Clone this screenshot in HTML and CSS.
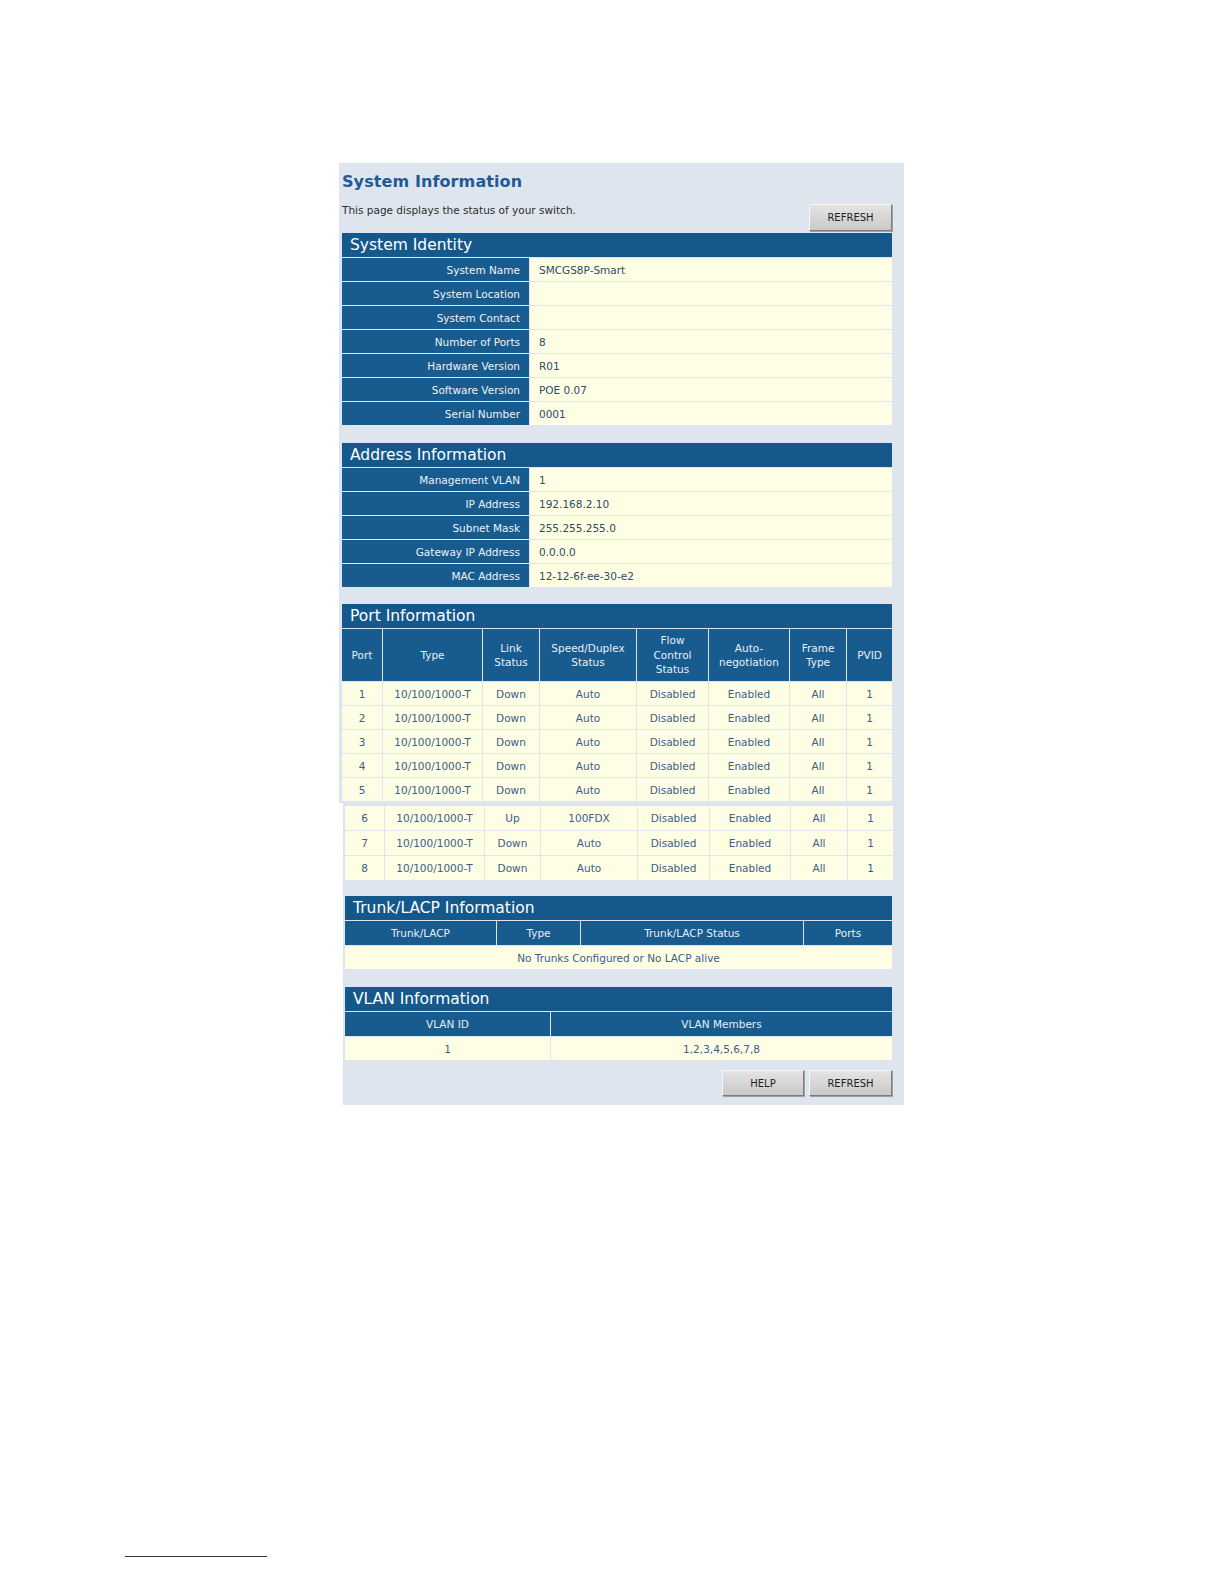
FILE: index.html
```html
<!DOCTYPE html>
<html>
<head>
<meta charset="utf-8">
<title>System Information</title>
<link rel="stylesheet" href="styles.css">
</head>
<body>
<div class="panel panel-top">
  <h1 class="title">System Information</h1>
  <div class="intro">
    <p class="desc">This page displays the status of your switch.</p>
    <button class="btn btn-top">REFRESH</button>
  </div>

  <div class="section first">
    <div class="sec-head">System Identity</div>
    <table class="kv">
      <tr><td class="lbl">System Name</td><td class="val">SMCGS8P-Smart</td></tr>
      <tr><td class="lbl">System Location</td><td class="val"></td></tr>
      <tr><td class="lbl">System Contact</td><td class="val"></td></tr>
      <tr><td class="lbl">Number of Ports</td><td class="val">8</td></tr>
      <tr><td class="lbl">Hardware Version</td><td class="val">R01</td></tr>
      <tr><td class="lbl">Software Version</td><td class="val">POE 0.07</td></tr>
      <tr><td class="lbl">Serial Number</td><td class="val">0001</td></tr>
    </table>
  </div>

  <div class="section">
    <div class="sec-head">Address Information</div>
    <table class="kv">
      <tr><td class="lbl">Management VLAN</td><td class="val">1</td></tr>
      <tr><td class="lbl">IP Address</td><td class="val">192.168.2.10</td></tr>
      <tr><td class="lbl">Subnet Mask</td><td class="val">255.255.255.0</td></tr>
      <tr><td class="lbl">Gateway IP Address</td><td class="val">0.0.0.0</td></tr>
      <tr><td class="lbl">MAC Address</td><td class="val">12-12-6f-ee-30-e2</td></tr>
    </table>
  </div>

  <div class="section ports-sec">
    <div class="sec-head">Port Information</div>
    <table class="grid ports ports-a">
      <colgroup>
        <col class="c-port"><col class="c-type"><col class="c-link"><col class="c-speed">
        <col class="c-flow"><col class="c-auto"><col class="c-frame"><col class="c-pvid">
      </colgroup>
      <tr class="hrow tall">
        <th>Port</th><th>Type</th><th>Link<br>Status</th><th>Speed/Duplex<br>Status</th>
        <th>Flow<br>Control<br>Status</th><th>Auto-<br>negotiation</th><th>Frame<br>Type</th><th>PVID</th>
      </tr>
      <tr><td>1</td><td>10/100/1000-T</td><td>Down</td><td>Auto</td><td>Disabled</td><td>Enabled</td><td>All</td><td>1</td></tr>
      <tr><td>2</td><td>10/100/1000-T</td><td>Down</td><td>Auto</td><td>Disabled</td><td>Enabled</td><td>All</td><td>1</td></tr>
      <tr><td>3</td><td>10/100/1000-T</td><td>Down</td><td>Auto</td><td>Disabled</td><td>Enabled</td><td>All</td><td>1</td></tr>
      <tr><td>4</td><td>10/100/1000-T</td><td>Down</td><td>Auto</td><td>Disabled</td><td>Enabled</td><td>All</td><td>1</td></tr>
      <tr><td>5</td><td>10/100/1000-T</td><td>Down</td><td>Auto</td><td>Disabled</td><td>Enabled</td><td>All</td><td>1</td></tr>
    </table>
  </div>
</div>

<div class="panel panel-bottom">
  <table class="grid ports ports-b">
    <colgroup>
      <col class="b-port"><col class="b-type"><col class="b-link"><col class="b-speed">
      <col class="c-flow"><col class="c-auto"><col class="c-frame"><col class="c-pvid">
    </colgroup>
    <tr><td>6</td><td>10/100/1000-T</td><td>Up</td><td>100FDX</td><td>Disabled</td><td>Enabled</td><td>All</td><td>1</td></tr>
    <tr><td>7</td><td>10/100/1000-T</td><td>Down</td><td>Auto</td><td>Disabled</td><td>Enabled</td><td>All</td><td>1</td></tr>
    <tr><td>8</td><td>10/100/1000-T</td><td>Down</td><td>Auto</td><td>Disabled</td><td>Enabled</td><td>All</td><td>1</td></tr>
  </table>

  <div class="section trunk-sec">
    <div class="sec-head">Trunk/LACP Information</div>
    <table class="grid">
      <colgroup>
        <col class="t-trunk"><col class="t-type"><col class="t-status"><col class="t-ports">
      </colgroup>
      <tr class="hrow"><th>Trunk/LACP</th><th>Type</th><th>Trunk/LACP Status</th><th>Ports</th></tr>
      <tr><td colspan="4">No Trunks Configured or No LACP alive</td></tr>
    </table>
  </div>

  <div class="section">
    <div class="sec-head">VLAN Information</div>
    <table class="grid">
      <colgroup>
        <col class="v-id"><col class="v-mem">
      </colgroup>
      <tr class="hrow"><th>VLAN ID</th><th>VLAN Members</th></tr>
      <tr><td>1</td><td>1,2,3,4,5,6,7,8</td></tr>
    </table>
  </div>

  <div class="actions">
    <button class="btn btn-help">HELP</button>
    <button class="btn btn-refresh">REFRESH</button>
  </div>
</div>

<div class="footnote-rule"></div>
</body>
</html>
```

FILE: styles.css
```css
html, body {
  margin: 0;
  padding: 0;
  background: #ffffff;
}

body {
  font-family: "DejaVu Sans", Verdana, sans-serif;
  font-size: 10.5px;
  color: #2f4b6e;
}

.panel {
  background: #dfe5ee;
  box-sizing: border-box;
}

.panel-top {
  margin-left: 339px;
  margin-top: 163px;
  width: 565px;
  padding: 0 12px 1px 3px;
}

.panel-bottom {
  margin-left: 343px;
  width: 561px;
  padding: 2px 12px 9px 2px;
}

.title {
  margin: 0;
  padding-top: 9px;
  height: 20px;
  line-height: 20px;
  font-family: "DejaVu Sans", Verdana, sans-serif;
  font-size: 16px;
  font-weight: bold;
  color: #1f5996;
  letter-spacing: 0.1px;
}

.intro {
  display: flex;
  justify-content: space-between;
  align-items: flex-start;
  height: 41px;
}

.desc {
  margin: 0;
  padding-top: 11px;
  line-height: 14px;
  font-size: 10.5px;
  color: #2d2d2d;
}

.btn {
  font-family: "DejaVu Sans", Verdana, sans-serif;
  font-size: 10px;
  color: #1e1e1e;
  background: linear-gradient(#e4e4e4, #c9c9c9);
  border: 1px solid;
  border-color: #f6f6f6 #7d7d7d #7d7d7d #f6f6f6;
  box-shadow: 1px 1px 0 #a0a0a0;
  padding: 0;
  cursor: pointer;
}

.btn-top {
  margin-top: 12px;
  width: 83px;
  height: 27px;
}

.section {
  margin-top: 17px;
}

.section.first {
  margin-top: 0;
}

.section.ports-sec {
  margin-top: 16px;
}

.section.trunk-sec {
  margin-top: 15px;
}

.sec-head {
  height: 24px;
  line-height: 25px;
  background: #14588c;
  color: #ffffff;
  font-family: "DejaVu Sans", Verdana, sans-serif;
  font-size: 15.5px;
  padding-left: 8px;
}

table {
  border-collapse: separate;
  border-spacing: 1px;
  width: calc(100% + 2px);
  margin: 0 -1px;
  table-layout: fixed;
}

td, th {
  padding: 0;
  white-space: nowrap;
  overflow: hidden;
}

.kv td {
  height: 23px;
}

.kv .lbl {
  width: 187px;
  background: #175b8f;
  color: #eef3f8;
  text-align: right;
  padding-right: 9px;
  box-sizing: border-box;
}

.kv .val {
  background: #fefee4;
  color: #2f4a6a;
  padding-left: 9px;
}

.grid td {
  background: #fefee4;
  color: #3b6088;
  text-align: center;
  height: 23px;
}

.grid th {
  background: #175b8f;
  color: #e9eff6;
  font-weight: normal;
  text-align: center;
  height: 24px;
  line-height: 14.5px;
}

.grid .hrow.tall th {
  height: 52px;
}

.ports-b td {
  height: 24px;
}

.c-port { width: 40px; }
.c-type { width: 99px; }
.c-link { width: 56px; }
.c-speed { width: 96px; }
.c-flow { width: 71px; }
.c-auto { width: 80px; }
.c-frame { width: 56px; }
.c-pvid { width: 45px; }

.b-port { width: 39px; }
.b-type { width: 99px; }
.b-link { width: 55px; }
.b-speed { width: 96px; }

.t-trunk { width: 151px; }
.t-type { width: 83px; }
.t-status { width: 222px; }
.t-ports { width: 88px; }

.v-id { width: 205px; }
.v-mem { width: 341px; }

.actions {
  display: flex;
  justify-content: flex-end;
  gap: 5px;
  margin-top: 9px;
}

.btn-help {
  width: 82px;
  height: 26px;
}

.btn-refresh {
  width: 83px;
  height: 26px;
}

.footnote-rule {
  margin-left: 125px;
  margin-top: 451px;
  width: 142px;
  height: 0;
  border-top: 1px solid #333333;
}
```
